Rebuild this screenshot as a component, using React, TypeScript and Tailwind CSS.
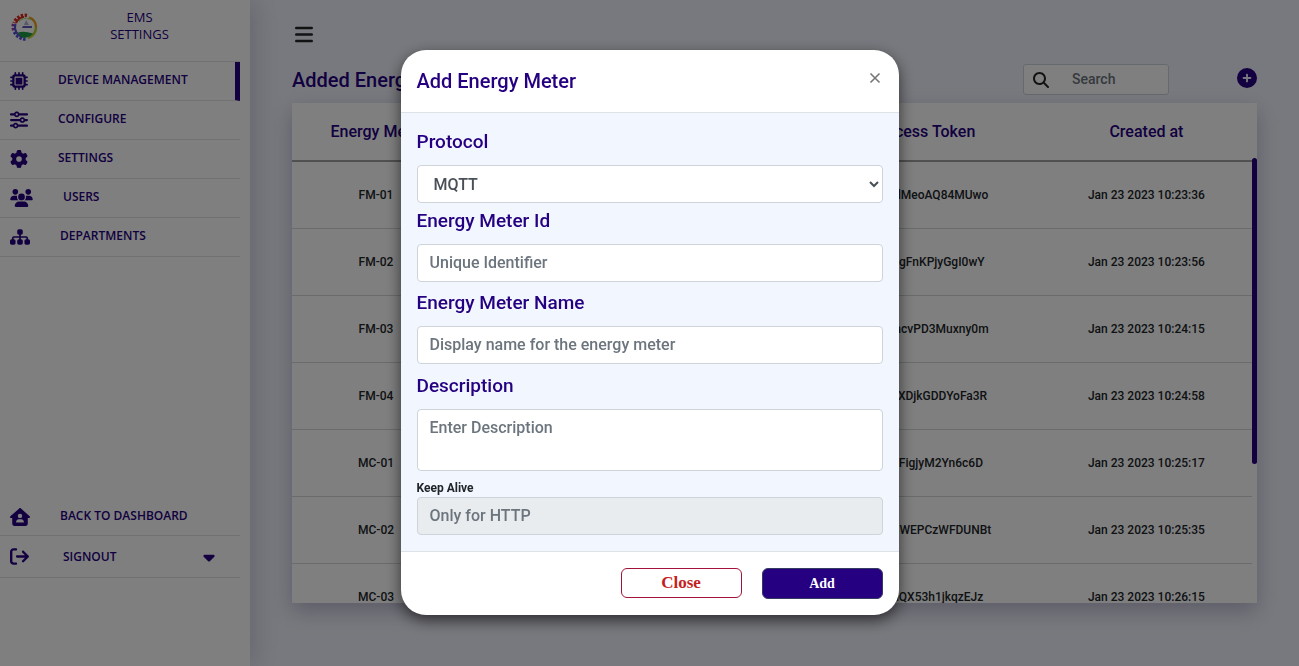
import React, { useState } from 'react';
import {
  FaArrowRightFromBracket,
  FaBars,
  FaCaretDown,
  FaCirclePlus,
  FaGear,
  FaHouseUser,
  FaMagnifyingGlass,
  FaMicrochip,
  FaSitemap,
  FaSliders,
  FaUsers,
} from 'react-icons/fa6';

const menuItems = [
  { label: 'DEVICE MANAGEMENT', icon: FaMicrochip, iconWidth: 'w-[18px]', active: true },
  { label: 'CONFIGURE', icon: FaSliders, iconWidth: 'w-[18px]', active: false },
  { label: 'SETTINGS', icon: FaGear, iconWidth: 'w-[18px]', active: false },
  { label: 'USERS', icon: FaUsers, iconWidth: 'w-[23px]', active: false },
  { label: 'DEPARTMENTS', icon: FaSitemap, iconWidth: 'w-5', active: false },
];

const meters = [
  { id: 'FM-01', token: 'b7TqtdMeoAQ84MUwo', createdAt: 'Jan 23 2023 10:23:36' },
  { id: 'FM-02', token: 'Ld2vegFnKPjyGgI0wY', createdAt: 'Jan 23 2023 10:23:56' },
  { id: 'FM-03', token: 'M9HsacvPD3Muxny0m', createdAt: 'Jan 23 2023 10:24:15' },
  { id: 'FM-04', token: 'pmWzXDjkGDDYoFa3R', createdAt: 'Jan 23 2023 10:24:58' },
  { id: 'MC-01', token: 'u5tcEFigjyM2Yn6c6D', createdAt: 'Jan 23 2023 10:25:17' },
  { id: 'MC-02', token: 'r8JadHWEPCzWFDUNBt', createdAt: 'Jan 23 2023 10:25:35' },
  { id: 'MC-03', token: 'y4VmQX53h1jkqzEJz', createdAt: 'Jan 23 2023 10:26:15' },
];

const labelClass = 'mb-[10px] block text-[19px] font-medium leading-[26px] text-[#250080]';

const inputClass =
  'block w-full rounded border border-[#ced4da] bg-white px-3 py-1.5 text-base font-medium text-[#495057] placeholder:text-[#6c757d]';

const Logo: React.FC = () => (
  <svg className="h-7 w-7" viewBox="0 0 28 28" fill="none" aria-hidden="true">
    <path d="M16 2.5A12 12 0 0 0 3 10" stroke="#d92a1c" strokeWidth="3.5" strokeDasharray="2.4 1.4" />
    <path d="M2.5 11A12 12 0 0 0 3 18" stroke="#8f3fae" strokeWidth="3.5" strokeDasharray="2.4 1.4" />
    <path d="M3.5 19A12 12 0 0 0 16 26" stroke="#4c50d8" strokeWidth="3.5" strokeDasharray="2.4 1.4" />
    <path d="M13 4A10 10 0 0 0 5 10" stroke="#d92a1c" strokeWidth="2" />
    <path d="M4.5 11A10 10 0 0 0 12 24" stroke="#5a50d0" strokeWidth="2" />
    <path d="M18 4.5A10 10 0 0 1 25 14" stroke="#e8a21c" strokeWidth="2.5" />
    <path d="M25 14A11 11 0 0 1 17 25" stroke="#b9c92c" strokeWidth="2.5" />
    <path d="M7 19.5Q13 17.5 22 20.5A10 10 0 0 1 10 24Z" fill="#1e9a45" />
    <path d="M8 8.5A9 9 0 0 1 20 7" stroke="#a8d88c" strokeWidth="1.5" strokeDasharray="2 1" />
    <path d="M12 13h9v2h-10z" fill="#5c58b8" />
    <path d="M15 7l-2 5h5z" fill="#a9b4cf" />
  </svg>
);

const Sidebar: React.FC = () => (
  <aside className="flex w-[250px] shrink-0 flex-col bg-white pr-[10px] font-['Open_Sans',sans-serif] text-[#250080] shadow-[5px_0_25px_rgba(60,50,110,0.2)]">
    <div className="flex h-[61px] items-start pl-[11px] pt-[9px]">
      <div className="pt-1">
        <Logo />
      </div>
      <h2 className="flex-1 text-center text-[13px] font-medium leading-[17px]">
        EMS
        <br />
        SETTINGS
      </h2>
    </div>
    <nav className="border-t border-[#dee2e6]">
      {menuItems.map(({ label, icon: Icon, iconWidth, active }) => (
        <a
          key={label}
          href="#"
          className={`flex h-[39px] items-center gap-[30px] border-b border-[#dee2e6] pl-[10px] text-xs font-semibold ${
            active ? 'border-r-[5px] border-r-[#250080]' : ''
          }`}
        >
          <Icon className={`h-[18px] ${iconWidth}`} />
          <span className="pb-0.5">{label}</span>
        </a>
      ))}
    </nav>
    <div className="mb-[88px] mt-auto">
      <a href="#" className="flex h-[42px] items-center gap-[30px] border-b border-[#dee2e6] pl-[10px] pt-1 text-xs font-semibold">
        <FaHouseUser className="h-[18px] w-5" />
        <span className="pb-0.5">BACK TO DASHBOARD</span>
      </a>
      <button type="button" className="flex h-[42px] w-full items-center border-b border-[#dee2e6] pl-[10px] pr-6 text-xs font-semibold">
        <FaArrowRightFromBracket className="mr-[34px] h-[19px] w-[19px]" />
        SIGNOUT
        <FaCaretDown className="ml-auto h-[18px] w-[14px]" />
      </button>
    </div>
  </aside>
);

const MeterTable: React.FC = () => (
  <div className="relative mt-2 h-[500px] overflow-hidden bg-white pr-[5px] shadow-[0_8px_20px_rgba(60,50,110,0.3)]">
    <table className="w-full table-fixed border-collapse text-center">
      <thead>
        <tr className="h-[58px] border-b-2 border-[#a0a0a0] text-base text-[#250080]">
          <th className="w-[17.5%] pl-1 font-medium">Energy Meter</th>
          <th className="font-medium">Name</th>
          <th className="font-medium">Description</th>
          <th className="w-[24%] font-medium">Access Token</th>
          <th className="w-[22%] font-medium">Created at</th>
        </tr>
      </thead>
      <tbody className="text-xs font-medium text-[#212529]">
        {meters.map((meter) => (
          <tr key={meter.id} className="h-[67px] border-b border-[#d4d7da]">
            <td>{meter.id}</td>
            <td></td>
            <td></td>
            <td>{meter.token}</td>
            <td>{meter.createdAt}</td>
          </tr>
        ))}
      </tbody>
    </table>
    {/* scroll thumb */}
    <div className="absolute right-0 top-[55px] h-[306px] w-[5px] rounded-full bg-[#250080]" />
  </div>
);

const AddMeterModal: React.FC<{ onClose: () => void }> = ({ onClose }) => {
  const [protocol, setProtocol] = useState('MQTT');

  return (
    <div className="fixed inset-0 z-10 flex items-start justify-center bg-black/50 pt-[50px]">
      <form
        role="dialog"
        aria-labelledby="modal-title"
        className="w-full max-w-[498px] overflow-hidden rounded-[25px] bg-white shadow-[0_5px_15px_rgba(0,0,0,0.6)]"
        onSubmit={(e) => e.preventDefault()}
      >
        <div className="flex h-[63px] items-center justify-between border-b border-[#dee2e6] px-4">
          <h5 id="modal-title" className="text-xl font-medium text-[#250080]">
            Add Energy Meter
          </h5>
          <button type="button" aria-label="Close dialog" className="pb-1.5 text-[#777]" onClick={onClose}>
            <svg className="h-4 w-4" viewBox="0 0 16 16" stroke="currentColor" strokeWidth="1.6" aria-hidden="true">
              <path d="M3.5 3.5l9 9M12.5 3.5l-9 9" />
            </svg>
          </button>
        </div>

        <div className="bg-[#f2f6ff] p-4">
          <label htmlFor="protocol" className={labelClass}>
            Protocol
          </label>
          <select
            id="protocol"
            className="block h-[38px] w-full rounded border border-[#ced4da] bg-white px-3 text-base font-medium text-[#495057]"
            value={protocol}
            onChange={(e) => setProtocol(e.target.value)}
          >
            <option>MQTT</option>
            <option>HTTP</option>
          </select>

          <label htmlFor="meter-id" className={`mt-[5px] ${labelClass}`}>
            Energy Meter Id
          </label>
          <input id="meter-id" type="text" placeholder="Unique Identifier" className={inputClass} />

          <label htmlFor="meter-name" className={`mt-2 ${labelClass}`}>
            Energy Meter Name
          </label>
          <input id="meter-name" type="text" placeholder="Display name for the energy meter" className={inputClass} />

          <label htmlFor="description" className={`mt-[9px] ${labelClass}`}>
            Description
          </label>
          <textarea id="description" rows={2} placeholder="Enter Description" className={`${inputClass} h-[62px] resize-none`} />

          <label htmlFor="keep-alive" className="mt-2 block text-xs font-bold leading-[18px] text-[#212529]">
            Keep Alive
          </label>
          <input
            id="keep-alive"
            type="text"
            placeholder="Only for HTTP"
            disabled={protocol === 'MQTT'}
            className={`${inputClass} disabled:bg-[#e9ecef]`}
          />
        </div>

        <div className="flex justify-end gap-5 border-t border-[#dee2e6] p-4 font-['Liberation_Serif',serif] font-bold">
          <button
            type="button"
            className="h-[30px] w-[121px] rounded-md border border-[#a3123a] bg-white text-[17px] leading-5 text-[#c5201c]"
            onClick={onClose}
          >
            Close
          </button>
          <button type="submit" className="h-[31px] w-[121px] rounded-md border border-[#343a60] bg-[#250080] text-sm text-white">
            Add
          </button>
        </div>
      </form>
    </div>
  );
};

export default function App() {
  const [showModal, setShowModal] = useState(true);

  return (
    <div className="flex h-screen overflow-hidden bg-[#f1f3fc] font-['Roboto',sans-serif]">
      <Sidebar />
      <main className="min-w-0 flex-1 px-[42px] pt-6">
        <button type="button" aria-label="Toggle menu" className="block pl-[3px] text-[#212529]">
          <FaBars className="h-[21px] w-[18px]" />
        </button>
        <div className="mt-[19px] flex h-[31px] items-center">
          <h1 className="text-xl font-medium text-[#250080]">Added Energy Meters</h1>
          <div className="ml-auto flex h-[31px] w-[146px] items-center rounded-[3px] border border-[#ced4da] bg-white pl-[9px]">
            <FaMagnifyingGlass className="h-4 w-4 shrink-0 text-[#212529]" />
            <input
              type="search"
              aria-label="Search"
              placeholder="Search"
              className="ml-[23px] w-full min-w-0 pb-0.5 text-sm font-medium placeholder:text-[#6c757d]"
            />
          </div>
          <button type="button" aria-label="Add energy meter" className="ml-[68px] pb-1 text-[#250080]" onClick={() => setShowModal(true)}>
            <FaCirclePlus className="h-5 w-5" />
          </button>
        </div>
        <MeterTable />
      </main>
      {showModal && <AddMeterModal onClose={() => setShowModal(false)} />}
    </div>
  );
}
